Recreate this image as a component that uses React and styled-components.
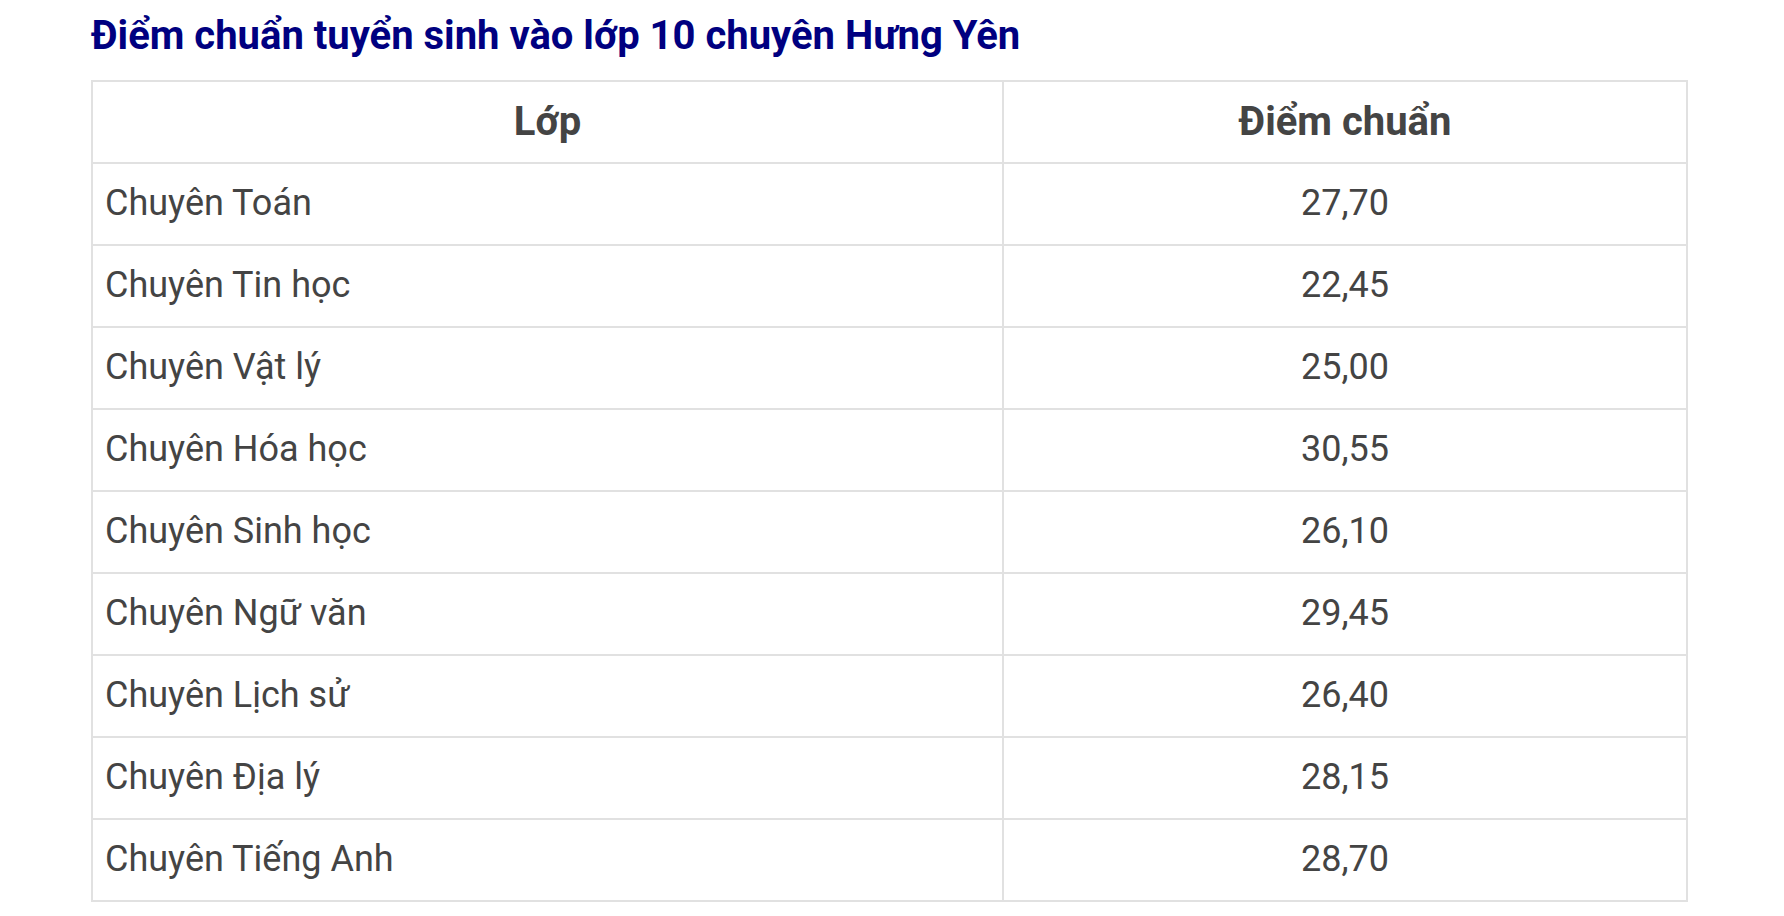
import React from "react";
import styled, { createGlobalStyle } from "styled-components";

const Global = createGlobalStyle`
  html, body { margin: 0; padding: 0; background: #fff; }
  body { font-family: Roboto, "Liberation Sans", Arial, sans-serif; }
`;

const Page = styled.div`
  padding: 12px 0 0 91px;
  width: 1597px;
`;

const Title = styled.h2`
  margin: 0 0 20px 0;
  font-size: 40px;
  line-height: 48px;
  font-weight: 700;
  color: #000080;
`;

const Table = styled.table`
  border-collapse: collapse;
  width: 1597px;
  table-layout: fixed;
`;

const Cell = styled.td`
  border: 2px solid #e1e1e1;
  height: 82px;
  padding: 0 12px;
  box-sizing: border-box;
  font-size: ${(p) => (p.$head ? "40px" : "36px")};
  color: #444;
  font-weight: ${(p) => (p.$head ? 700 : 400)};
  text-align: ${(p) => (p.$center ? "center" : "left")};
  vertical-align: middle;
  line-height: 1.2;
`;

const rows = [
  ["Chuyên Toán", "27,70"],
  ["Chuyên Tin học", "22,45"],
  ["Chuyên Vật lý", "25,00"],
  ["Chuyên Hóa học", "30,55"],
  ["Chuyên Sinh học", "26,10"],
  ["Chuyên Ngữ văn", "29,45"],
  ["Chuyên Lịch sử", "26,40"],
  ["Chuyên Địa lý", "28,15"],
  ["Chuyên Tiếng Anh", "28,70"],
];

export default function App() {
  return (
    <>
      <Global />
      <Page>
        <Title>Điểm chuẩn tuyển sinh vào lớp 10 chuyên Hưng Yên</Title>
        <Table>
          <colgroup>
            <col style={{ width: "911px" }} />
            <col />
          </colgroup>
          <tbody>
            <tr>
              <Cell $head $center>Lớp</Cell>
              <Cell $head $center>Điểm chuẩn</Cell>
            </tr>
            {rows.map(([a, b]) => (
              <tr key={a}>
                <Cell>{a}</Cell>
                <Cell $center>{b}</Cell>
              </tr>
            ))}
          </tbody>
        </Table>
      </Page>
    </>
  );
}
